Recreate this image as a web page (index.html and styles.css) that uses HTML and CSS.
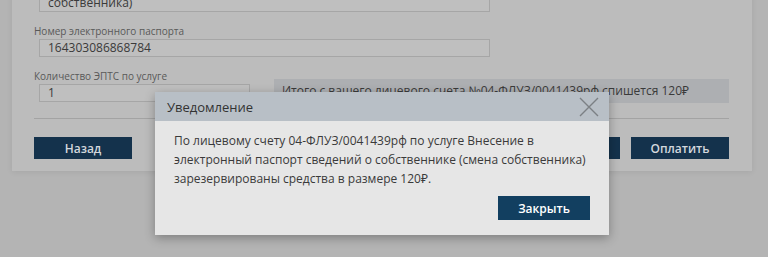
FILE: index.html
```html
<!DOCTYPE html>
<html>
<head>
    <title>Оплата услуги</title>
    <link rel="stylesheet" href="styles.css">
</head>
<body>
    <div class="card">
        <div class="field">
            <div class="input input-tall">Внесение в электронный паспорт сведений о собственнике (смена<br>собственника)</div>
        </div>

        <div class="field">
            <div class="label">Номер электронного паспорта</div>
            <div class="input">164303086868784</div>
        </div>

        <div class="row">
            <div class="field field-small">
                <div class="label">Количество ЭПТС по услуге</div>
                <div class="input">1</div>
            </div>
            <div class="summary">
                Итого с вашего лицевого счета №04-ФЛУЗ/0041439рф спишется 120₽
            </div>
        </div>

        <div class="divider"></div>

        <div class="actions">
            <button class="button">Назад</button>
            <div class="actions-right">
                <button class="button">Отмена</button>
                <button class="button">Оплатить</button>
            </div>
        </div>
    </div>

    <div class="modal">
        <div class="modal-header">
            <span class="modal-title">Уведомление</span>
            <svg class="modal-close" width="20" height="20" viewBox="0 0 20 20">
                <path d="M1 1 L19 19 M19 1 L1 19" stroke="#7c8084" stroke-width="1.4" fill="none"/>
            </svg>
        </div>
        <div class="modal-body">
            <p>По лицевому счету 04-ФЛУЗ/0041439рф по услуге Внесение в
            электронный паспорт сведений о собственнике (смена собственника)
            зарезервированы средства в размере 120₽.</p>
            <div class="modal-footer">
                <button class="button button-modal">Закрыть</button>
            </div>
        </div>
    </div>
</body>
</html>
```

FILE: styles.css
```css
body {
    margin: 0;
    height: 257px;
    overflow: hidden;
    background-color: #b4b4b4;
    font-family: "Open Sans", "Noto Sans", sans-serif;
    color: #3a3a3a;
}

.card {
    margin: -30px 16px 0 12px;
    padding: 0 23px 12px 22px;
    background-color: #bcbcbc;
    box-shadow: 0 1px 6px rgba(0, 0, 0, 0.08);
}

.field {
    margin-bottom: 13px;
}

.label {
    font-size: 10px;
    line-height: 13px;
    color: #595959;
    margin-bottom: 1px;
}

.input {
    box-sizing: border-box;
    width: 451px;
    height: 18px;
    margin-left: 5px;
    padding: 0 8px;
    border: 1px solid #a6a6a6;
    background-color: #bfbfbf;
    font-size: 12px;
    line-height: 16px;
    color: #3a3a3a;
}

.input-tall {
    height: 42px;
    padding-top: 5px;
    line-height: 18px;
}

.row {
    display: flex;
    align-items: flex-end;
    justify-content: space-between;
}

.field-small {
    margin-bottom: 0;
    padding-bottom: 1px;
}

.field-small .input {
    width: 211px;
}

.summary {
    box-sizing: border-box;
    width: 455px;
    height: 24px;
    padding: 0 8px;
    background-color: #adafb2;
    font-size: 12px;
    line-height: 24px;
    color: #3a3a3a;
}

.divider {
    height: 1px;
    margin: 15px 0 18px;
    background-color: #a3a3a3;
}

.actions {
    display: flex;
    justify-content: space-between;
}

.actions-right {
    display: flex;
    gap: 11px;
}

.button {
    width: 98px;
    height: 22px;
    padding: 0;
    border: none;
    background-color: #14324c;
    color: #d3d8dd;
    font-family: "Open Sans", "Noto Sans", sans-serif;
    font-size: 12px;
    font-weight: 600;
}

.modal {
    position: absolute;
    left: 155px;
    top: 92px;
    width: 454px;
    height: 143px;
    background-color: #e6e6e6;
    box-shadow: 0 3px 10px rgba(0, 0, 0, 0.3);
}

.modal-header {
    display: flex;
    align-items: center;
    justify-content: space-between;
    height: 29px;
    padding: 0 10px 0 12px;
    background-color: #b8bfc6;
}

.modal-title {
    font-size: 13px;
    color: #333;
}

.modal-close {
    margin-top: 1px;
}

.modal-body {
    padding: 10px 19px 15px 19px;
}

.modal-body p {
    margin: 0;
    font-size: 12px;
    line-height: 19px;
    color: #3a3a3a;
}

.modal-footer {
    display: flex;
    justify-content: flex-end;
    margin-top: 8px;
}

.button-modal {
    width: 92px;
    height: 24px;
    background-color: #123f60;
    color: #ffffff;
}
```
